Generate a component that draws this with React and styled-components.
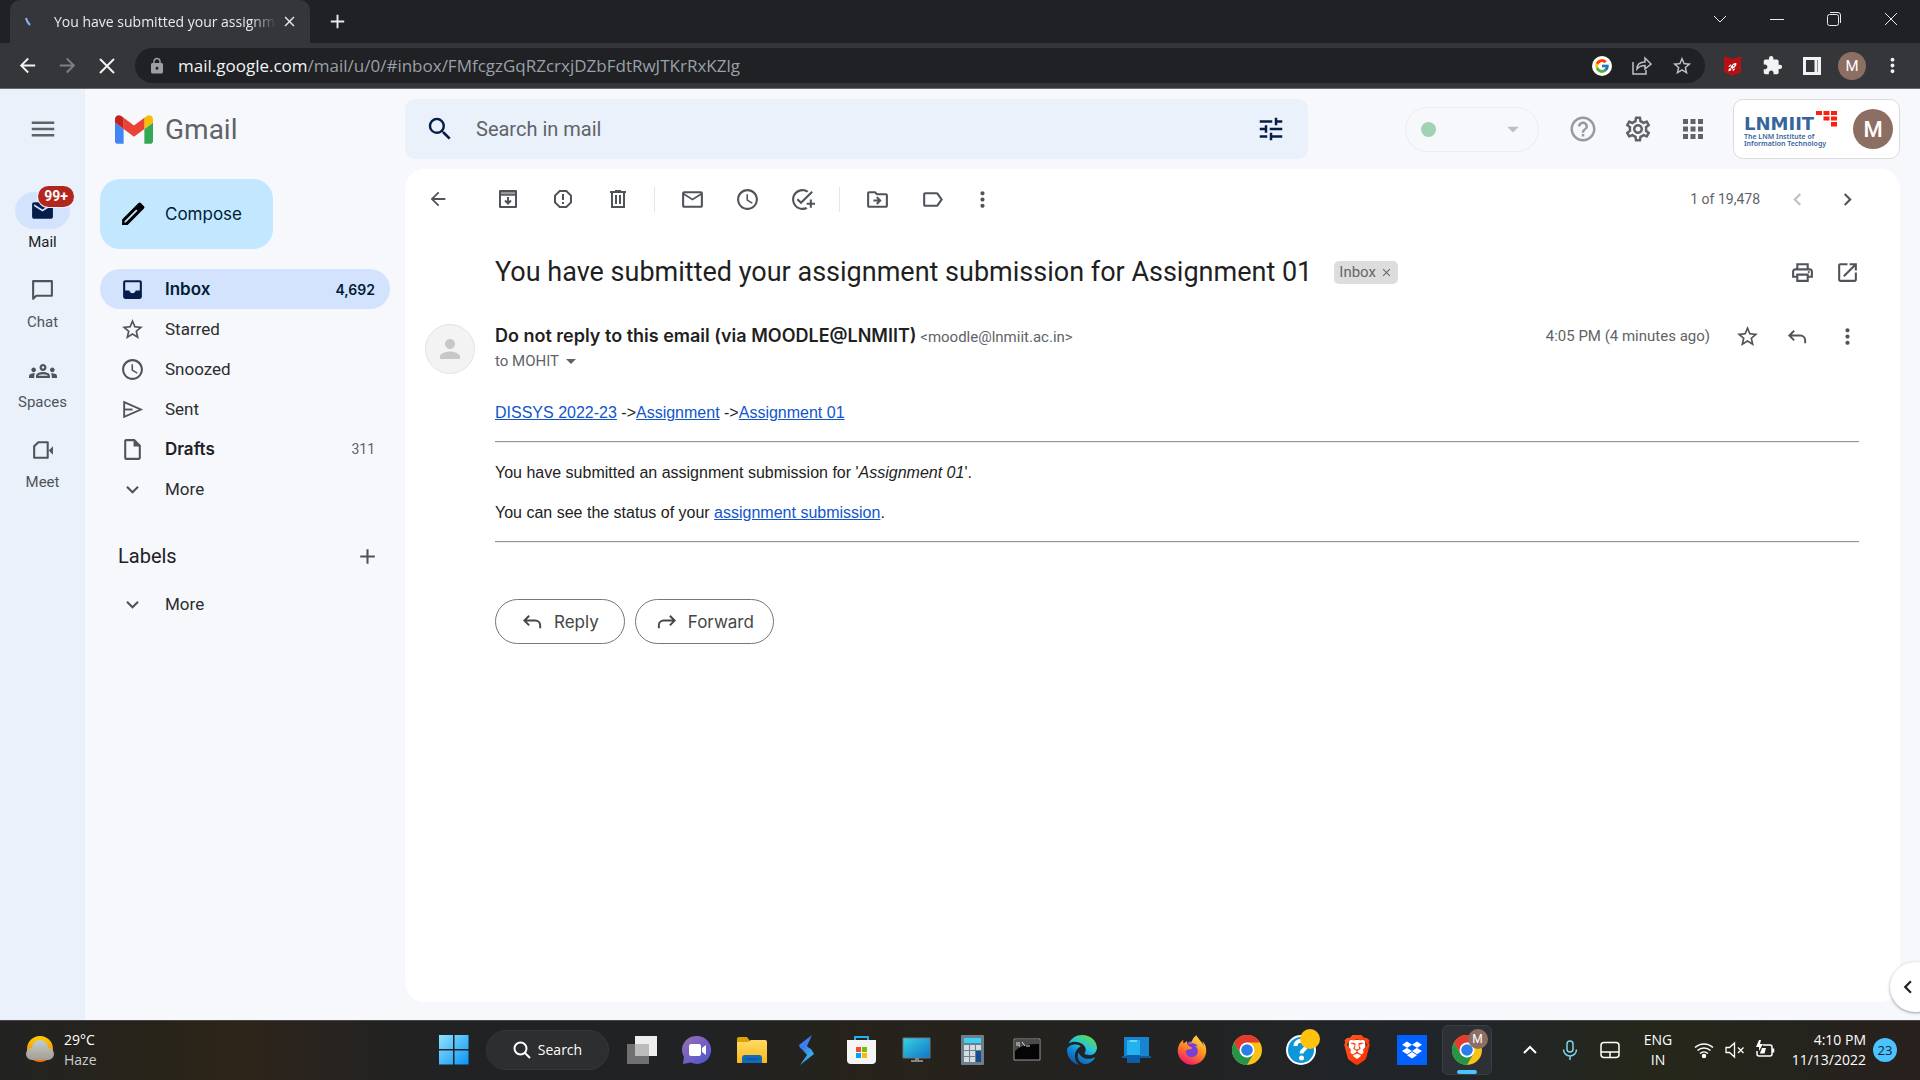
import React from "react";
import styled, { createGlobalStyle, css } from "styled-components";
import {
  MdMenu, MdSearch, MdTune, MdHelpOutline, MdApps, MdArrowBack,
  MdReportGmailerrorred, MdMailOutline, MdSchedule, MdAddTask, MdOutlineDriveFileMove,
  MdLabelOutline, MdMoreVert, MdChevronLeft, MdChevronRight, MdOutlinePrint, MdOpenInNew,
  MdStarBorder, MdOutlineInsertDriveFile, MdExpandMore, MdAdd, MdOutlineGroups,
  MdOutlineSettings, MdLock, MdExtension, MdArrowDropDown, MdArrowForward,
  MdClose, MdRocketLaunch, MdPerson, MdMail,
} from "react-icons/md";
import { FcGoogle } from "react-icons/fc";
import { FaDropbox, FaEdge, FaFirefoxBrowser, FaBrave } from "react-icons/fa6";

const ui = '"Open Sans", "Noto Sans", sans-serif';
const product = 'Roboto, "Liberation Sans", sans-serif';
const strong = 'Inter, Roboto, sans-serif';
const mailFont = '"Liberation Sans", Arial, sans-serif';

const Global = createGlobalStyle`
  * { box-sizing: border-box; }
  body { margin: 0; font-family: ${product}; color: #202124; background: #f6f8fc; }
  button, input { font: inherit; color: inherit; border: 0; padding: 0; margin: 0; background: none; outline: 0; }
  button { display: flex; align-items: center; justify-content: center; cursor: pointer; }
  svg { display: block; flex: none; }
  p, h1, h2 { margin: 0; font-weight: 400; }
`;

const Screen = styled.div`
  min-height: 100vh;
  display: flex;
  flex-direction: column;
`;

/* ---------- browser frame ---------- */
const TabStrip = styled.header`
  height: 43px;
  padding-left: 10px;
  display: flex;
  background: #202124;
  color: #e8eaed;
  font-family: ${ui};
`;
const Tab = styled.div`
  width: 300px;
  padding: 0 12px 0 15px;
  display: flex;
  align-items: center;
  gap: 17px;
  border-radius: 10px 10px 0 0;
  background: #35363a;
`;
const TabTitle = styled.span`
  flex: 1;
  min-width: 0;
  overflow: hidden;
  white-space: nowrap;
  font-size: 14px;
  line-height: 20px;
  mask-image: linear-gradient(90deg, #000 88%, transparent);
`;
const TabClose = styled.button`
  width: 17px;
  height: 20px;
  margin-left: -13px;
`;
const NewTab = styled.button`
  width: 54px;
`;
const WindowControls = styled.div`
  margin-left: auto;
  display: flex;
  padding: 0 1px 5px 0;
`;
const WindowButton = styled.button`
  width: 57px;
`;
const BrowserBar = styled.div`
  height: 46px;
  padding: 5px 8px 5px 7px;
  display: flex;
  align-items: center;
  background: #35363a;
  border-bottom: 1px solid #67696d;
  color: #f1f3f4;
  font-family: ${ui};
`;
const BarButton = styled.button`
  width: 40px;
  height: 35px;
  color: ${(p) => p.$color || "inherit"};
`;
const Omnibox = styled.form`
  flex: 1;
  min-width: 0;
  height: 35px;
  margin: 0 7px 0 8px;
  padding: 0 3px 0 13px;
  display: flex;
  align-items: center;
  border-radius: 18px;
  background: #202124;
  font-size: 17px;
  line-height: 24px;
`;
const Host = styled.label`
  margin-left: 12px;
`;
const Path = styled.input`
  flex: 1;
  min-width: 0;
  color: #9aa0a6;
`;

const Initial = styled.span`
  width: ${(p) => p.$size}px;
  height: ${(p) => p.$size}px;
  display: flex;
  align-items: center;
  justify-content: center;
  border-radius: 50%;
  background: #8d6e63;
  color: #fff;
  font-family: ${product};
  font-size: ${(p) => p.$text}px;
  font-weight: ${(p) => p.$weight || 400};
`;

/* ---------- mail page ---------- */
const Page = styled.div`
  flex: 1;
  display: flex;
  position: relative;
  overflow: hidden;
`;
const Rail = styled.nav`
  width: 85px;
  background: #eaf1fb;
  display: flex;
  flex-direction: column;
  align-items: center;
`;
const MenuButton = styled.button`
  width: 60px;
  height: 80px;
  margin-bottom: 10px;
  color: #5f6368;
`;
const RailItem = styled.button`
  width: 85px;
  height: 80px;
  padding-top: 13px;
  flex-direction: column;
  justify-content: flex-start;
  gap: 3px;
  font-size: 15px;
  line-height: 20px;
  color: ${(p) => (p.$active ? "#202124" : "#50545a")};
`;
const RailPill = styled.span`
  width: 55px;
  height: 37px;
  display: flex;
  align-items: center;
  justify-content: center;
  border-radius: 19px;
  position: relative;
  background: ${(p) => (p.$active ? "#d3e3fd" : "transparent")};
  color: ${(p) => (p.$active ? "#041e49" : "#50545a")};
`;
const Count = styled.span`
  position: absolute;
  top: -6px;
  right: -4px;
  width: 36px;
  height: 21px;
  border-radius: 11px;
  box-shadow: 0 0 0 1px #eaf1fb;
  background: #b3261e;
  color: #fff;
  font-size: 14px;
  line-height: 21px;
  font-weight: 700;
  text-align: center;
`;
const Side = styled.aside`
  width: 320px;
  padding: 0 15px;
  display: flex;
  flex-direction: column;
`;
const Brand = styled.a`
  height: 80px;
  padding-left: 15px;
  display: flex;
  align-items: center;
  gap: 12px;
  color: #5f6368;
  font-size: 28px;
  text-decoration: none;
`;
const Compose = styled.button`
  width: 173px;
  height: 70px;
  margin: 10px 0 20px;
  padding-left: 20px;
  justify-content: flex-start;
  gap: 20px;
  border-radius: 20px;
  background: #c2e7ff;
  color: #001d35;
  font-family: ${strong};
  font-size: 17px;
`;
const Folder = styled.button`
  width: 290px;
  height: 40px;
  padding: 0 15px 0 20px;
  justify-content: flex-start;
  gap: 20px;
  border-radius: 20px;
  font-size: 17px;
  color: #2b2d30;
  svg { color: #50545a; }
  ${(p) => p.$bold && css`
    font-family: ${strong};
    font-weight: 600;
    color: #202124;
  `}
  ${(p) => p.$active && css`
    background: #d3e3fd;
    color: #001d35;
    svg { color: #041e49; }
  `}
`;
const FolderCount = styled.span`
  margin-left: auto;
  font-size: 14px;
  font-weight: ${(p) => (p.$bold ? 600 : 400)};
  font-family: ${(p) => (p.$bold ? strong : product)};
  color: ${(p) => (p.$bold ? "#001d35" : "#5f6368")};
`;
const LabelsHead = styled.div`
  height: 40px;
  margin: 27px 0 8px;
  padding: 0 10px 0 18px;
  display: flex;
  align-items: center;
  justify-content: space-between;
  h2 { font-size: 20px; }
  svg { color: #50545a; }
`;
const Main = styled.main`
  flex: 1;
  min-width: 0;
  padding-right: 20px;
  display: flex;
  flex-direction: column;
`;
const TopBar = styled.div`
  height: 80px;
  display: flex;
  align-items: center;
`;
const SearchBox = styled.form`
  flex: 0 1 903px;
  height: 60px;
  padding: 0 12px 0 10px;
  display: flex;
  align-items: center;
  border-radius: 10px;
  background: #eaf1fb;
  color: #041e49;
  input { flex: 1; min-width: 0; margin-left: 11px; font-size: 20px; color: #5f6368; }
  input::placeholder { color: #5f6368; opacity: 1; }
`;
const IconButton = styled.button`
  width: ${(p) => p.$w || 50}px;
  height: 50px;
  color: ${(p) => p.$color || "#50545a"};
`;
const TopTools = styled.div`
  margin-left: auto;
  display: flex;
  align-items: center;
`;
const Status = styled.button`
  width: 134px;
  height: 45px;
  margin-right: 16px;
  padding: 0 11px 0 15px;
  justify-content: space-between;
  border: 1px solid #e9ecf1;
  border-radius: 23px;
  color: #bcbfc3;
  span { width: 15px; height: 15px; border-radius: 50%; background: #a3d1b3; }
`;
const Account = styled.button`
  width: 167px;
  height: 60px;
  margin-left: 13px;
  padding: 0 6px 0 10px;
  justify-content: space-between;
  border: 1px solid #dadce0;
  border-radius: 10px;
  background: #fff;
`;
const Institute = styled.span`
  display: flex;
  flex-direction: column;
  align-items: flex-start;
  color: #35659b;
  text-align: left;
`;
const InstituteTop = styled.span`
  height: 22px;
  display: flex;
  align-items: flex-start;
  gap: 2px;
  b { padding-top: 3px; font-family: "DejaVu Sans", sans-serif; font-size: 18px; line-height: 19px; }
`;
const InstituteLine = styled.span`
  font-family: "Noto Sans", "Open Sans", sans-serif;
  font-size: 7px;
  line-height: 7px;
  font-weight: 600;
  white-space: nowrap;
`;
const Panel = styled.section`
  flex: 1;
  margin-bottom: 18px;
  border-radius: 20px;
  background: #fff;
`;
const ActionBar = styled.div`
  height: 60px;
  padding: 0 28px 0 8px;
  display: flex;
  align-items: center;
`;
const Group = styled.div`
  display: flex;
  align-items: center;
  margin-left: ${(p) => (p.$end ? "auto" : "17px")};
`;
const Rule = styled.span`
  width: 1px;
  height: 25px;
  margin: 0 10px 0 9px;
  background: #e4e6e9;
`;
const Position = styled.span`
  margin-right: 12px;
  color: #5f6368;
  font-size: 14px;
`;
const Subject = styled.div`
  height: 95px;
  padding: 0 30px 9px 90px;
  display: flex;
  align-items: center;
  gap: 22px;
  h1 { font-size: 27px; line-height: 36px; color: #1f1f1f; white-space: nowrap; }
`;
const Chip = styled.button`
  height: 23px;
  padding: 0 5px;
  gap: 4px;
  border-radius: 5px;
  background: #dddddd;
  color: #666;
  font-size: 15px;
`;
const SubjectTools = styled.div`
  margin-left: auto;
  display: flex;
`;
const Sender = styled.div`
  padding: 0 28px 0 20px;
  display: grid;
  grid-template-columns: 50px 1fr auto;
  column-gap: 20px;
  align-items: start;
`;
const Portrait = styled.span`
  width: 50px;
  height: 50px;
  display: flex;
  align-items: center;
  justify-content: center;
  border: 1px solid #e3e3e3;
  border-radius: 50%;
  background: #f3f3f3;
  color: #c8c8c8;
`;
const From = styled.p`
  font-size: 15px;
  line-height: 24px;
  color: #5f6368;
  b { font-family: ${strong}; font-size: 18px; font-weight: 600; color: #1f1f1f; }
`;
const Recipient = styled.button`
  height: 24px;
  font-size: 15px;
  color: #5f6368;
`;
const SenderTools = styled.div`
  height: 24px;
  display: flex;
  align-items: center;
  color: #5f6368;
  font-size: 15px;
  > span { margin-right: 12px; }
`;
const Letter = styled.article`
  margin: 27px 41px 0 90px;
  font-family: ${mailFont};
  font-size: 16px;
  line-height: 24px;
  color: #222;
  a { color: #1155cc; }
  p + p { margin-top: 16px; }
  hr { height: 2px; margin: 16px 0 18px; border: 0; border-top: 1px solid #959595; border-bottom: 1px solid #eee; }
`;
const Replies = styled.div`
  margin: 56px 0 0 90px;
  display: flex;
  gap: 10px;
`;
const ReplyButton = styled.button`
  height: 45px;
  padding: 0 ${(p) => p.$pad}px;
  gap: 10px;
  border: 1px solid #747775;
  border-radius: 23px;
  color: #444746;
  font-family: ${strong};
  font-size: 17px;
`;
const PanelToggle = styled.button`
  position: absolute;
  right: -20px;
  bottom: 8px;
  width: 50px;
  height: 50px;
  padding-right: 14px;
  border-radius: 50%;
  background: #fff;
  box-shadow: 0 1px 3px rgba(60, 64, 67, 0.5);
`;

/* ---------- taskbar ---------- */
const Taskbar = styled.footer`
  height: 60px;
  padding-bottom: 2px;
  display: grid;
  grid-template-columns: 1fr auto 1fr;
  align-items: center;
  border-top: 1px solid #45474a;
  color: #fff;
  font-family: ${ui};
  font-size: 14px;
  line-height: 20px;
  background: linear-gradient(90deg, #222322 0%, #272319 8%, #2e2519 12.5%, #272320 17%, #202224 24%,
    #202224 36%, #27231b 45%, #232221 58%, #20252a 76%, #26271a 86%, #25231d 94%, #28201d 100%);
`;
const Weather = styled.button`
  width: 120px;
  height: 48px;
  padding-left: 24px;
  justify-content: flex-start;
  gap: 8px;
  text-align: left;
  small { display: block; font-size: 14px; color: #ccc; }
`;
const Apps = styled.div`
  display: flex;
  align-items: center;
`;
const AppCell = styled.button`
  width: 55px;
  height: 57px;
`;
const ActiveApp = styled.span`
  width: 50px;
  height: 50px;
  display: flex;
  align-items: center;
  justify-content: center;
  position: relative;
  border: 1px solid #3a3e42;
  border-radius: 6px;
  background: #2d3135;
  &::after {
    content: "";
    position: absolute;
    left: 14px;
    bottom: 0;
    width: 20px;
    height: 4px;
    border-radius: 2px;
    background: #4cc2ff;
  }
`;
const ProfileMark = styled.span`
  position: absolute;
  top: 3px;
  right: 3px;
`;
const TaskSearch = styled.button`
  width: 123px;
  height: 40px;
  margin: 0 5px;
  gap: 7px;
  border: 1px solid #343639;
  border-radius: 20px;
  background: #2c2e30;
`;
const Tray = styled.div`
  padding-right: 23px;
  display: flex;
  align-items: center;
  justify-content: flex-end;
`;
const TrayCell = styled.button`
  width: ${(p) => p.$w}px;
  height: 50px;
  text-align: center;
`;
const Clock = styled.button`
  width: 84px;
  margin-right: 7px;
  justify-content: flex-end;
  text-align: right;
`;
const Notices = styled.button`
  width: 24px;
  height: 24px;
  border-radius: 50%;
  background: #4cc2ff;
  color: #123;
  font-size: 13px;
`;

/* ---------- drawings ---------- */
const Line = ({ size = 25, box = 24, w = 2, children, ...rest }) => (
  <svg width={size} height={size} viewBox={`0 0 ${box} ${box}`} fill="none" stroke="currentColor" strokeWidth={w} {...rest}>
    {children}
  </svg>
);
const ReplyArrow = ({ size = 25, flip }) => (
  <Line size={size}>
    <path d={flip ? "M15.500 6l5 5-5 5M20 11H9a5 5 0 0 0-5 5v3" : "M8.500 6l-5 5 5 5M4 11h11a5 5 0 0 1 5 5v3"} />
  </Line>
);
const ArchiveIcon = () => (
  <Line size={24}>
    <path d="M4 4h16v16H4z" strokeLinejoin="round" />
    <path d="M4 4h16v4H4z" fill="currentColor" fillOpacity=".6" stroke="none" />
    <path d="M4 8h16" strokeWidth="1.500" />
    <path d="M12 10v6M9 13.500l3 3 3-3" />
  </Line>
);
const Trash = () => (
  <Line size={24}>
    <path d="M6 6v14h12V6M4 5h16M9 4h6" />
    <path d="M10 8v9M14 8v9" />
  </Line>
);
const InboxIcon = ({ size }) => (
  <svg width={size} height={size} viewBox="0 0 24 24" fill="currentColor">
    <path fillRule="evenodd" d="M5 3h14a2 2 0 0 1 2 2v14a2 2 0 0 1-2 2H5a2 2 0 0 1-2-2V5a2 2 0 0 1 2-2zm0 2v8h4c.3 1.700 1.500 2.700 3 2.700s2.700-1 3-2.700h4V5z" />
  </svg>
);
const SentIcon = ({ size }) => (
  <Line size={size} w={1.8}>
    <path d="M4 5l16 7-16 7z" />
    <path d="M4 12h8" />
  </Line>
);
const MeetIcon = () => (
  <Line size={25}>
    <path d="M8 4h9v15H4V8z" strokeLinejoin="round" />
    <path d="M18 12l4-4v8z" fill="currentColor" stroke="none" />
  </Line>
);
const ChatIcon = () => (
  <Line size={25}>
    <path d="M3 3h18v14H6l-3 3z" strokeLinejoin="round" />
  </Line>
);
const ComposeIcon = () => (
  <svg width="25" height="25" viewBox="0 0 24 24">
    <path fillRule="evenodd" d="M17.500 1.200L2 16.700V22h5.300L22.800 6.500a1.900 1.900 0 0 0 0-2.700L20.200 1.200a1.900 1.900 0 0 0-2.700 0zM4.300 19.700v-1.200L15.600 7.200l1.200 1.200L5.500 19.700z" />
  </svg>
);
const GmailLogo = () => (
  <svg width="38" height="29" viewBox="52 42 88 66">
    <path fill="#4285f4" d="M58 108h14V74L52 59v43c0 3.320 2.690 6 6 6" />
    <path fill="#34a853" d="M120 108h14c3.320 0 6-2.690 6-6V59l-20 15" />
    <path fill="#fbbc04" d="M120 48v26l20-15v-8c0-7.420-8.470-11.650-14.400-7.200" />
    <path fill="#ea4335" d="M72 74V48l24 18 24-18v26L96 92" />
    <path fill="#c5221f" d="M52 51v8l20 15V48l-5.600-4.200c-5.940-4.450-14.400-.22-14.400 7.200" />
  </svg>
);
const LogoTiles = () => (
  <svg width="22" height="16" viewBox="0 0 22 16" fill="#f9200d">
    <path d="M0 0h6v4H0zM7.500 0h6v4h-6zM15 0h6v4h-6zM7.500 5.500h6v4h-6zM15 5.500h6v4h-6zM15 11h6v4.500h-6z" />
  </svg>
);
const Chrome = () => (
  <svg width="30" height="30" viewBox="0 0 30 30">
    <circle cx="15" cy="15" r="15" fill="#fbc116" />
    <path d="M2 7.500A15 15 0 0 1 28 7.500H15l-6.500 11.200z" fill="#e33b2e" />
    <path d="M2 7.500l6.500 11.200L15 22.500l6.500-3.800L15 30A15 15 0 0 1 2 7.500z" fill="#269547" />
    <circle cx="15" cy="15" r="7.500" fill="#fff" />
    <circle cx="15" cy="15" r="5.800" fill="#2b7de9" />
  </svg>
);
const HiddenSvg = styled.svg`
  position: absolute;
`;
const Shades = () => (
  <HiddenSvg width="0" height="0" aria-hidden="true">
    <defs>
      <linearGradient id="edge" x1="0.800" y1="0.100" x2="0.300" y2="1">
        <stop offset="0" stopColor="#55d85f" /><stop offset=".35" stopColor="#2ac3dc" /><stop offset=".6" stopColor="#0f8be0" /><stop offset="1" stopColor="#0c59a4" />
      </linearGradient>
      <linearGradient id="fox" x1="0.800" y1="0" x2="0.300" y2="1">
        <stop offset="0" stopColor="#ffe14a" /><stop offset=".5" stopColor="#ff8a1f" /><stop offset="1" stopColor="#f0156f" />
      </linearGradient>
      <linearGradient id="brave" x1="0" y1="0" x2="1" y2="1">
        <stop offset="0" stopColor="#ff5a1f" /><stop offset="1" stopColor="#ff2a00" />
      </linearGradient>
      <linearGradient id="win" x1="0" y1="0" x2="1" y2="1">
        <stop offset="0" stopColor="#8fe3ff" /><stop offset="1" stopColor="#0a94f5" />
      </linearGradient>
      <linearGradient id="sun" x1="0" y1="0" x2="0" y2="1">
        <stop offset="0" stopColor="#ffd100" /><stop offset="1" stopColor="#f26a12" />
      </linearGradient>
      <linearGradient id="cloud" x1="0" y1="0" x2="0" y2="1">
        <stop offset="0" stopColor="#bdd0d6" /><stop offset="1" stopColor="#a99c8b" />
      </linearGradient>
      <linearGradient id="chat" x1="0" y1="0" x2="1" y2="1">
        <stop offset="0" stopColor="#9b6fae" /><stop offset="1" stopColor="#4b53d6" />
      </linearGradient>
      <linearGradient id="folder" x1="0" y1="0" x2="0" y2="1">
        <stop offset="0" stopColor="#ffda66" /><stop offset="1" stopColor="#f9b916" />
      </linearGradient>
      <linearGradient id="screen" x1="0" y1="0" x2="1" y2="1">
        <stop offset="0" stopColor="#37d3e0" /><stop offset="1" stopColor="#1173c9" />
      </linearGradient>
      <linearGradient id="bolt" x1="0" y1="0" x2="1" y2="1">
        <stop offset="0" stopColor="#3a6df0" /><stop offset="1" stopColor="#35d0e8" />
      </linearGradient>
    </defs>
  </HiddenSvg>
);
const Art = ({ children, size = 30 }) => (
  <svg width={size} height={size} viewBox="0 0 30 30">{children}</svg>
);
const apps = [
  ["Task view", <Art><path d="M8 1h22v20H8z" fill="#eee" /><path d="M0 9h22v20H0z" fill="#707070" /><path d="M8 9h14v12H8z" fill="#bcbcbc" /></Art>],
  ["Chat", <Art><path d="M15 1a14 14 0 1 1-6 26.600L1 29l1-7A14 14 0 0 1 15 1z" fill="url(#chat)" /><rect x="7" y="9" width="12" height="12" rx="2" fill="#fff" /><path d="M20 13l4-3v10l-4-3z" fill="#fff" /></Art>],
  ["File Explorer", <Art><path d="M0 4a2 2 0 0 1 2-2h8l3 4v5H0z" fill="#e0a008" /><path d="M0 7h11l3-2h14a2 2 0 0 1 2 2v21H0z" fill="url(#folder)" /><path d="M5 28v-5a3 3 0 0 1 3-3h14a3 3 0 0 1 3 3v5z" fill="#0f6cbd" /><path d="M8 24h14" stroke="#0a4a88" /></Art>],
  ["Spark", <Art><path d="M20 0L7 10l1 3 12 5-5-7z" fill="#3f7df2" /><path d="M12 10l-4 2 7 8-7 10 14-11-3-5z" fill="url(#bolt)" /></Art>],
  ["Store", <Art><path d="M8 8V2h13v6" fill="none" stroke="#25aef0" strokeWidth="2" /><path d="M0 5h29v20a4 4 0 0 1-4 4H4a4 4 0 0 1-4-4z" fill="#f5f5f5" /><path d="M9 12h5v5H9z" fill="#f25022" /><path d="M15 12h5v5h-5z" fill="#7fba00" /><path d="M9 18h5v5H9z" fill="#00a4ef" /><path d="M15 18h5v5h-5z" fill="#ffb900" /></Art>],
  ["Desktop", <Art><path d="M1 3h27v20H1z" fill="url(#screen)" stroke="#6b7780" /><path d="M13 23h4v2h4v2H9v-2h4z" fill="#7a858c" /></Art>],
  ["Calculator", <Art><rect x="4" width="23" height="30" rx="1" fill="#6f7e8b" /><path d="M7 3h17v5H7z" fill="#3fd0f8" /><path d="M7 10h5v5H7zM13 10h5v5h-5zM19 10h5v5h-5zM7 16h5v5H7zM13 16h5v5h-5zM7 22h5v5H7zM13 22h5v5h-5z" fill="#d5dde4" /><path d="M19 16h5v11h-5z" fill="#164d8c" /></Art>],
  ["Command Prompt", <Art><path d="M2 4h26v21H2z" fill="#050505" stroke="#9a9a9a" /><path d="M3 5h24v4c-9 0-18 1-24 7z" fill="#4a4a4a" /><path d="M5 7v4M7 7v4h1M10 7l3 4M14 11h4" stroke="#ddd" fill="none" /></Art>],
  ["Edge", <FaEdge size={30} fill="url(#edge)" />],
  ["Phone Link", <Art><path d="M2 2h25v19H2z" fill="#1684d0" /><path d="M0 21h29v2H0z" fill="#0d5c9c" /><path d="M5 5h13v23H5z" fill="#22b2ef" /><path d="M5 20h13v8H5z" fill="#0c5cab" /><path d="M8 6h7" stroke="#bff" /></Art>],
  ["Firefox", <Art><circle cx="15" cy="15" r="9" fill="#7540d8" /><FaFirefoxBrowser size={30} fill="url(#fox)" /></Art>],
  ["Chrome", <Chrome />],
  ["Get Help", <svg width="36" height="42" viewBox="-3 -3 36 42"><circle cx="14" cy="18" r="14" fill="#0d96d8" stroke="#fff" strokeWidth="2" /><path d="M8.500 14c0-7 11-7 11-.5 0 4-5 4-5 8" fill="none" stroke="#fff" strokeWidth="4" /><circle cx="14.500" cy="26" r="2.500" fill="#fff" /><circle cx="23" cy="7" r="10" fill="#ffc20e" /></svg>],
  ["Brave", <Art><path d="M7 5h16l1 15-9 8-9-8z" fill="#fff" /><FaBrave size={30} fill="url(#brave)" /></Art>],
  ["Dropbox", <Art><path d="M0 0h30v30H0z" fill="#0061fe" /><FaDropbox size={20} x="5" y="5" fill="#fff" /></Art>],
];

const Icon = ({ as: Glyph, size = 25, label, ...rest }) => (
  <IconButton type="button" aria-label={label} {...rest}><Glyph size={size} /></IconButton>
);

const folders = [
  { name: "Inbox", icon: InboxIcon, count: "4,692", bold: true, active: true },
  { name: "Starred", icon: MdStarBorder },
  { name: "Snoozed", icon: MdSchedule },
  { name: "Sent", icon: SentIcon },
  { name: "Drafts", icon: MdOutlineInsertDriveFile, count: "311", bold: true },
  { name: "More", icon: MdExpandMore },
];

function Browser() {
  return (
    <>
      <TabStrip>
        <Tab>
          <Line size={12} box={12} color="#8ab4f8"><path d="M1 2c.5 3 2 5 4 7" /></Line>
          <TabTitle>You have submitted your assignment</TabTitle>
          <TabClose aria-label="Close tab"><MdClose size={17} /></TabClose>
        </Tab>
        <NewTab aria-label="New tab"><MdAdd size={23} /></NewTab>
        <WindowControls>
          <WindowButton aria-label="Search tabs"><Line size={14} box={14} w={1}><path d="M1 4l6 6 6-6" /></Line></WindowButton>
          <WindowButton aria-label="Minimize"><Line size={14} box={14} w={1}><path d="M0 7.500h14" /></Line></WindowButton>
          <WindowButton aria-label="Restore"><Line size={14} box={14} w={1}><rect x=".5" y="2.500" width="11" height="11" rx="2" /><path d="M3 .5h8a2.500 2.500 0 0 1 2.500 2.500v8" /></Line></WindowButton>
          <WindowButton aria-label="Close"><Line size={14} box={14} w={1}><path d="M1 1l12 12M13 1L1 13" /></Line></WindowButton>
        </WindowControls>
      </TabStrip>
      <BrowserBar>
        <BarButton aria-label="Back"><MdArrowBack size={23} /></BarButton>
        <BarButton aria-label="Forward" $color="#7d8084"><MdArrowForward size={23} /></BarButton>
        <BarButton aria-label="Stop"><Line size={16} box={16}><path d="M1 1l14 14M15 1L1 15" /></Line></BarButton>
        <Omnibox>
          <MdLock size={18} color="#9aa0a6" />
          <Host htmlFor="url">mail.google.com</Host>
          <Path id="url" defaultValue="/mail/u/0/#inbox/FMfcgzGqRZcrxjDZbFdtRwJTKrRxKZlg" />
          <BarButton type="button" aria-label="Google">
            <svg width="20" height="20" viewBox="0 0 20 20"><circle cx="10" cy="10" r="10" fill="#fff" /><FcGoogle size={16} x="2" y="2" /></svg>
          </BarButton>
          <BarButton type="button" aria-label="Share" $color="#bdc1c6">
            <Line size={20} box={20} w={1.5}><path d="M1 6v12h13v-4M5 13c0-5 3-7 8-7V2l6 6-6 5V9.500c-4 0-6 1-8 3.500z" /></Line>
          </BarButton>
          <BarButton type="button" aria-label="Bookmark" $color="#bdc1c6"><MdStarBorder size={22} /></BarButton>
        </Omnibox>
        <BarButton aria-label="Web protection">
          <svg width="17" height="20" viewBox="0 0 17 20"><path d="M0 0l8.500 3L17 0v16l-8.500 4L0 16z" fill="#b80f14" /><MdRocketLaunch size={10} x="3.500" y="6" fill="#fff" /></svg>
        </BarButton>
        <BarButton aria-label="Extensions"><MdExtension size={21} /></BarButton>
        <BarButton aria-label="Side panel"><Line size={18} box={18} w={3}><path d="M1.500 1.500h15v15h-15zM13 2v14" /></Line></BarButton>
        <BarButton aria-label="Profile"><Initial $size={28} $text={15}>M</Initial></BarButton>
        <BarButton aria-label="Browser menu"><MdMoreVert size={23} /></BarButton>
      </BrowserBar>
    </>
  );
}

function Mail() {
  return (
    <Page>
      <Rail>
        <MenuButton aria-label="Main menu"><MdMenu size={30} /></MenuButton>
        <RailItem $active><RailPill $active><MdMail size={25} /><Count>99+</Count></RailPill>Mail</RailItem>
        <RailItem><RailPill><ChatIcon /></RailPill>Chat</RailItem>
        <RailItem><RailPill><MdOutlineGroups size={28} /></RailPill>Spaces</RailItem>
        <RailItem><RailPill><MeetIcon /></RailPill>Meet</RailItem>
      </Rail>
      <Side>
        <Brand href="#inbox"><GmailLogo />Gmail</Brand>
        <Compose><ComposeIcon />Compose</Compose>
        {folders.map(({ name, icon: Glyph, count, bold, active }) => (
          <Folder key={name} $bold={bold} $active={active}>
            <Glyph size={25} />{name}
            {count && <FolderCount $bold={active}>{count}</FolderCount>}
          </Folder>
        ))}
        <LabelsHead><h2>Labels</h2><button aria-label="Create label"><MdAdd size={25} /></button></LabelsHead>
        <Folder><MdExpandMore size={25} />More</Folder>
      </Side>
      <Main>
        <TopBar>
          <SearchBox role="search">
            <Icon as={MdSearch} size={30} label="Search" $color="#041e49" />
            <input type="search" aria-label="Search in mail" placeholder="Search in mail" />
            <Icon as={MdTune} size={30} label="Search options" $color="#041e49" />
          </SearchBox>
          <TopTools>
            <Status aria-label="Status"><span /><MdArrowDropDown size={28} /></Status>
            <Icon as={MdHelpOutline} size={30} label="Support" $w={55} $color="#97999c" />
            <Icon as={MdOutlineSettings} size={30} label="Settings" $w={55} $color="#5f6368" />
            <Icon as={MdApps} size={30} label="Google apps" $w={55} $color="#5f6368" />
            <Account aria-label="Account">
              <Institute>
                <InstituteTop><b>LNMIIT</b><LogoTiles /></InstituteTop>
                <InstituteLine>The LNM Institute of</InstituteLine>
                <InstituteLine>Information Technology</InstituteLine>
              </Institute>
              <Initial $size={40} $text={22} $weight={500}>M</Initial>
            </Account>
          </TopTools>
        </TopBar>
        <Panel>
          <ActionBar>
            <Icon as={MdArrowBack} size={22} label="Back to Inbox" />
            <Group>
              <Icon as={ArchiveIcon} label="Archive" $w={55} />
              <Icon as={MdReportGmailerrorred} size={24} label="Report spam" $w={55} />
              <Icon as={Trash} label="Delete" $w={55} />
              <Rule />
              <Icon as={MdMailOutline} label="Mark as unread" $w={55} />
              <Icon as={MdSchedule} label="Snooze" $w={55} />
              <Icon as={MdAddTask} label="Add to tasks" $w={55} />
              <Rule />
              <Icon as={MdOutlineDriveFileMove} label="Move to" $w={55} />
              <Icon as={MdLabelOutline} label="Labels" $w={55} />
              <Icon as={MdMoreVert} label="More" $w={45} />
            </Group>
            <Group $end>
              <Position>1 of 19,478</Position>
              <Icon as={MdChevronLeft} label="Newer" $color="#bdbfc1" />
              <Icon as={MdChevronRight} label="Older" />
            </Group>
          </ActionBar>
          <Subject>
            <h1>You have submitted your assignment submission for Assignment 01</h1>
            <Chip>Inbox<MdClose size={13} /></Chip>
            <SubjectTools>
              <Icon as={MdOutlinePrint} label="Print all" $w={45} />
              <Icon as={MdOpenInNew} label="In new window" $w={45} />
            </SubjectTools>
          </Subject>
          <Sender>
            <Portrait><MdPerson size={30} /></Portrait>
            <div>
              <From><b>Do not reply to this email (via MOODLE@LNMIIT)</b> &lt;moodle@lnmiit.ac.in&gt;</From>
              <Recipient>to MOHIT<MdArrowDropDown size={24} /></Recipient>
            </div>
            <SenderTools>
              <span>4:05 PM (4 minutes ago)</span>
              <Icon as={MdStarBorder} label="Star" />
              <Icon as={ReplyArrow} size={23} label="Reply" />
              <Icon as={MdMoreVert} label="More options" />
            </SenderTools>
          </Sender>
          <Letter>
            <p><a href="#course">DISSYS 2022-23</a> -&gt;<a href="#list">Assignment</a> -&gt;<a href="#item">Assignment 01</a></p>
            <hr />
            <p>You have submitted an assignment submission for '<i>Assignment 01</i>'.</p>
            <p>You can see the status of your <a href="#status">assignment submission</a>.</p>
            <hr />
          </Letter>
          <Replies>
            <ReplyButton $pad={25}><ReplyArrow size={23} />Reply</ReplyButton>
            <ReplyButton $pad={19}><ReplyArrow size={23} flip />Forward</ReplyButton>
          </Replies>
        </Panel>
      </Main>
      <PanelToggle aria-label="Show side panel"><MdChevronLeft size={26} /></PanelToggle>
    </Page>
  );
}

function Desktop() {
  return (
    <Taskbar>
      <Weather>
        <svg width="32" height="32" viewBox="0 0 32 32">
          <circle cx="16" cy="15" r="13" fill="url(#sun)" />
          <path d="M8 26a6 6 0 0 1 0-12 8 8 0 0 1 16 0 6 6 0 0 1 0 12z" fill="url(#cloud)" />
        </svg>
        <span>29°C<small>Haze</small></span>
      </Weather>
      <Apps>
        <AppCell aria-label="Start"><Art><path d="M0 0h14v14H0zM15.500 0h14v14h-14zM0 15.500h14v14H0zM15.500 15.500h14v14h-14z" fill="url(#win)" /></Art></AppCell>
        <TaskSearch><Line size={18} box={18}><circle cx="7.500" cy="7.500" r="6" /><path d="M12 12l5 5" /></Line>Search</TaskSearch>
        {apps.map(([name, art]) => <AppCell key={name} aria-label={name}>{art}</AppCell>)}
        <AppCell aria-label="Gmail window">
          <ActiveApp><Chrome /><ProfileMark><Initial $size={20} $text={12}>M</Initial></ProfileMark></ActiveApp>
        </AppCell>
      </Apps>
      <Tray>
        <TrayCell $w={40} aria-label="Hidden icons"><Line size={14} box={14}><path d="M1 10l6-6 6 6" /></Line></TrayCell>
        <TrayCell $w={40} aria-label="Microphone">
          <Line size={20} box={20} w={1.5} color="#7fd3ea"><rect x="7" y="1" width="6" height="11" rx="3" /><path d="M3.500 9.500a6.500 6.500 0 0 0 13 0M10 16v4" /></Line>
        </TrayCell>
        <TrayCell $w={40} aria-label="Touchpad"><Line size={20} box={20} w={1.5}><rect x="1" y="2.500" width="18" height="15" rx="3" /><path d="M1 12h18M10 12v5" /></Line></TrayCell>
        <TrayCell $w={56}>ENG<br />IN</TrayCell>
        <TrayCell $w={36} aria-label="Wi-Fi">
          <Line size={20} box={20} w={1.5}><path d="M1 7.500a13 13 0 0 1 18 0M3.500 10.500a9.500 9.500 0 0 1 13 0M6 13.500a6 6 0 0 1 8 0" /><circle cx="10" cy="16" r="1.500" fill="currentColor" /></Line>
        </TrayCell>
        <TrayCell $w={26} aria-label="Volume muted">
          <Line size={20} box={20} w={1.3}><path d="M1 7.500h3.500L9.500 3v14l-5-4.500H1zM13 7.500l5.500 5.500M18.500 7.500L13 13" /></Line>
        </TrayCell>
        <TrayCell $w={34} aria-label="Battery">
          <Line size={20} box={20} w={1.5}><path d="M8 5h7a2 2 0 0 1 2 2v7a2 2 0 0 1-2 2H4a2 2 0 0 1-2-2v-3M18.500 8.500v4" /><path d="M5 13l2-5h4l-1.500 5.500H5zM4 0L1 7h3v4l4-7H5l1-4z" fill="currentColor" stroke="none" /></Line>
        </TrayCell>
        <Clock>4:10 PM<br />11/13/2022</Clock>
        <Notices>23</Notices>
      </Tray>
    </Taskbar>
  );
}

export default function App() {
  return (
    <Screen>
      <Global />
      <Shades />
      <Browser />
      <Mail />
      <Desktop />
    </Screen>
  );
}
